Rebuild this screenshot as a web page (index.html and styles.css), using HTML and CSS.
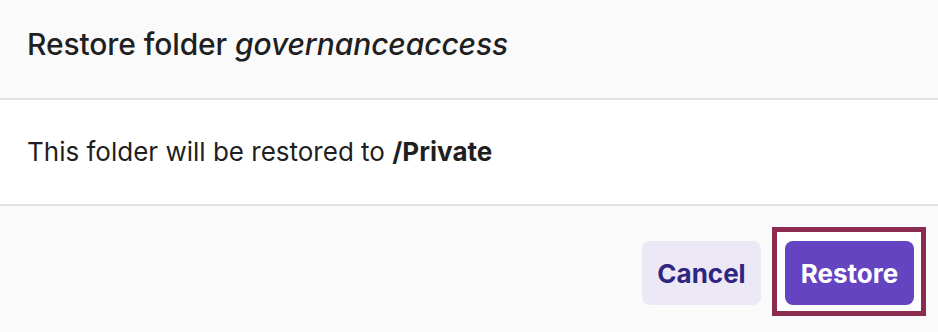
FILE: index.html
```html
<!DOCTYPE html>
<html lang="en">
<head>
<meta charset="utf-8">
<title>Restore folder</title>
<link rel="stylesheet" href="styles.css">
</head>
<body>
<div class="dialog">
  <header class="dialog-header">
    <h2 class="dialog-title">Restore folder <em>governanceaccess</em></h2>
  </header>
  <div class="dialog-body">
    <p class="dialog-text">This folder will be restored to <strong>/Private</strong></p>
  </div>
  <footer class="dialog-footer">
    <button class="btn btn-secondary" type="button">Cancel</button>
    <span class="focus-ring"><button class="btn btn-primary" type="button">Restore</button></span>
  </footer>
</div>
</body>
</html>
```

FILE: styles.css
```css
* { box-sizing: border-box; }
html, body { margin: 0; padding: 0; }
body {
  width: 938px;
  height: 332px;
  overflow: hidden;
  background: #fafafa;
  font-family: Inter, "Noto Sans", sans-serif;
  color: #1f1f22;
}
.dialog {
  display: flex;
  flex-direction: column;
  height: 332px;
}
.dialog-header {
  height: 100px;
  background: #fafafa;
  border-bottom: 2px solid #e2e2e6;
  display: flex;
  align-items: center;
  padding: 0 27px 10px;
}
.dialog-title {
  margin: 0;
  font-size: 30px;
  font-weight: 500;
  letter-spacing: -0.1px;
}
.dialog-title em { font-style: italic; font-weight: 500; }
.dialog-body {
  height: 106px;
  background: #ffffff;
  border-bottom: 2px solid #e2e2e6;
  display: flex;
  align-items: center;
  padding: 0 27px 2px;
}
.dialog-text {
  margin: 0;
  font-size: 26px;
  font-weight: 400;
}
.dialog-text strong { font-weight: 700; }
.dialog-footer {
  flex: 1;
  background: #fafafa;
  display: flex;
  justify-content: flex-end;
  align-items: flex-start;
  gap: 11px;
  padding: 21px 12px 0;
}
.btn {
  display: block;
  height: 64px;
  border: none;
  border-radius: 8px;
  font-family: Inter, "Noto Sans", sans-serif;
  font-size: 26px;
  font-weight: 700;
  padding: 0;
}
.btn-secondary {
  margin-top: 14px;
  width: 119px;
  background: #ece8f6;
  color: #2f2680;
}
.btn-primary {
  width: 129px;
  background: #6544c1;
  color: #ffffff;
}
.focus-ring {
  display: block;
  background: #ffffff;
  border: 5px solid #8c2a4f;
  padding: 9px 7px 6px 8px;
}
```
